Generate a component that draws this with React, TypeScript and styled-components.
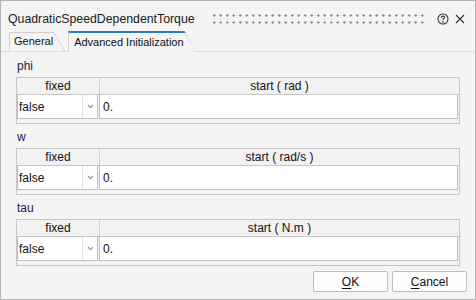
import * as React from 'react';
import styled, { createGlobalStyle } from 'styled-components';

const GlobalStyle = createGlobalStyle`
  html, body {
    margin: 0;
    padding: 0;
    background: #f4f4f4;
  }
  * { box-sizing: border-box; }
`;

const Window = styled.div`
  width: 476px;
  height: 300px;
  border: 1px solid #b3b3b3;
  background: #f4f4f4;
  display: flex;
  flex-direction: column;
  font-family: 'Liberation Sans', Arial, sans-serif;
  font-size: 12px;
  color: #111;
`;

const TitleBar = styled.div`
  height: 30px;
  display: flex;
  align-items: center;
  padding: 5px 9px 0 7px;
`;

const Title = styled.span`
  font-size: 12.3px;
  color: #1a1a1a;
  white-space: nowrap;
  margin-right: 16px;
`;

const Grip = styled.div`
  flex: 1;
  height: 10px;
  margin-right: 12px;
  background-image: radial-gradient(circle, #8c8c8c 1px, transparent 1.2px);
  background-size: 6.5px 7px;
  background-position: 0 -2px;
`;

const IconButton = styled.span<{ $gap?: number }>`
  width: 12px;
  height: 12px;
  margin-left: ${(p) => p.$gap ?? 0}px;
  display: flex;
  align-items: center;
  justify-content: center;
`;

const TabBar = styled.div`
  height: 21px;
  display: flex;
  align-items: flex-end;
  padding-left: 8px;
  border-bottom: 1px solid #dcdcdc;
`;

const Tab = styled.div<{ $active?: boolean }>`
  position: relative;
  height: ${(p) => (p.$active ? '21px' : '19px')};
  margin-bottom: ${(p) => (p.$active ? '-1px' : '0')};
  margin-right: ${(p) => (p.$active ? '0' : '3px')};
  padding: ${(p) => (p.$active ? '3px 12px 0 5px' : '2px 12px 0 4px')};
  border-left: 1px solid #cfcfcf;
  border-top: ${(p) => (p.$active ? '2px solid #2f7bc0' : '1px solid #cfcfcf')};
  background: #f4f4f4;
  font-size: 11px;
  white-space: nowrap;
  clip-path: polygon(0 0, calc(100% - 11px) 0, 100% 100%, 0 100%);
  &::after {
    content: '';
    position: absolute;
    top: 0;
    right: 0;
    width: 11px;
    bottom: 0;
    background: linear-gradient(
      to top right,
      transparent calc(50% - 0.7px),
      #c8c8c8 50%,
      transparent calc(50% + 0.7px)
    );
  }
`;

const Pane = styled.div`
  flex: 1;
  padding: 1px 15px 0 15px;
  display: flex;
  flex-direction: column;
`;

const Label = styled.div`
  height: 24px;
  display: flex;
  align-items: center;
  padding: 1px 0 0 1px;
  color: #1b2040;
`;

const Table = styled.div`
  width: 444px;
  border: 1px solid #c6c6c6;
  background: #f4f4f4;
  padding-bottom: 4px;
`;

const HeaderRow = styled.div`
  display: grid;
  grid-template-columns: 82px 1fr;
  height: 17px;
  border-bottom: 1px solid #c6c6c6;
  background: #f2f2f2;
`;

const HeaderCell = styled.div`
  display: flex;
  align-items: center;
  justify-content: center;
  & + & {
    border-left: 1px solid #d0d0d0;
  }
`;

const Row = styled.div`
  display: grid;
  grid-template-columns: 81px 1fr;
  column-gap: 1px;
  height: 24px;
  padding-right: 1px;
`;

const Combo = styled.div`
  display: flex;
  background: #fff;
  border: 1px solid #bfbfbf;
  border-top: none;
`;

const ComboText = styled.div`
  flex: 1;
  display: flex;
  align-items: center;
  padding-left: 1px;
`;

const ComboArrow = styled.div`
  width: 15px;
  border-left: 1px solid #e2e2e2;
  display: flex;
  align-items: center;
  justify-content: center;
`;

const Input = styled.div`
  display: flex;
  align-items: center;
  padding-left: 3px;
  background: #fff;
  border: 1px solid #bfbfbf;
  border-top: none;
`;

const Footer = styled.div`
  display: flex;
  justify-content: flex-end;
  gap: 4px;
  padding: 0 8px 7px 0;
`;

const Button = styled.button`
  width: 75px;
  height: 21px;
  border: 1px solid #bdbdbd;
  border-radius: 2px;
  background: #fdfdfd;
  font-family: 'Liberation Sans', Arial, sans-serif;
  font-size: 12px;
  color: #111;
  padding: 0;
  u { text-decoration-thickness: 1px; text-underline-offset: 2px; }
`;

const HelpIcon = () => (
  <svg width="12" height="12" viewBox="0 0 12 12" fill="none" stroke="#333" strokeWidth="1.1">
    <circle cx="6" cy="6" r="5" />
    <path d="M4.4 4.7c0-1 .7-1.6 1.6-1.6s1.6.6 1.6 1.4c0 .9-1.6 1.1-1.6 2.2" />
    <circle cx="6" cy="8.8" r=".35" fill="#333" />
  </svg>
);

const CloseIcon = () => (
  <svg width="10" height="10" viewBox="0 0 10 10" stroke="#333" strokeWidth="1.1">
    <path d="M1 1l8 8M9 1l-8 8" />
  </svg>
);

const Chevron = () => (
  <svg width="7" height="5" viewBox="0 0 7 5" fill="none" stroke="#9a9a9a" strokeWidth="1.3">
    <path d="M1 1l2.5 2.5L6 1" />
  </svg>
);

const params = [
  { name: 'phi', unit: 'rad' },
  { name: 'w', unit: 'rad/s' },
  { name: 'tau', unit: 'N.m' },
];

export default function App() {
  return (
    <>
      <GlobalStyle />
      <Window>
        <TitleBar>
          <Title>QuadraticSpeedDependentTorque</Title>
          <Grip />
          <IconButton>
            <HelpIcon />
          </IconButton>
          <IconButton $gap={5}>
            <CloseIcon />
          </IconButton>
        </TitleBar>
        <TabBar>
          <Tab>General</Tab>
          <Tab $active>Advanced Initialization</Tab>
        </TabBar>
        <Pane>
          {params.map((p) => (
            <React.Fragment key={p.name}>
              <Label>{p.name}</Label>
              <Table>
                <HeaderRow>
                  <HeaderCell>fixed</HeaderCell>
                  <HeaderCell>start ( {p.unit} )</HeaderCell>
                </HeaderRow>
                <Row>
                  <Combo>
                    <ComboText>false</ComboText>
                    <ComboArrow>
                      <Chevron />
                    </ComboArrow>
                  </Combo>
                  <Input>0.</Input>
                </Row>
              </Table>
            </React.Fragment>
          ))}
        </Pane>
        <Footer>
          <Button>
            <u>O</u>K
          </Button>
          <Button>
            <u>C</u>ancel
          </Button>
        </Footer>
      </Window>
    </>
  );
}
